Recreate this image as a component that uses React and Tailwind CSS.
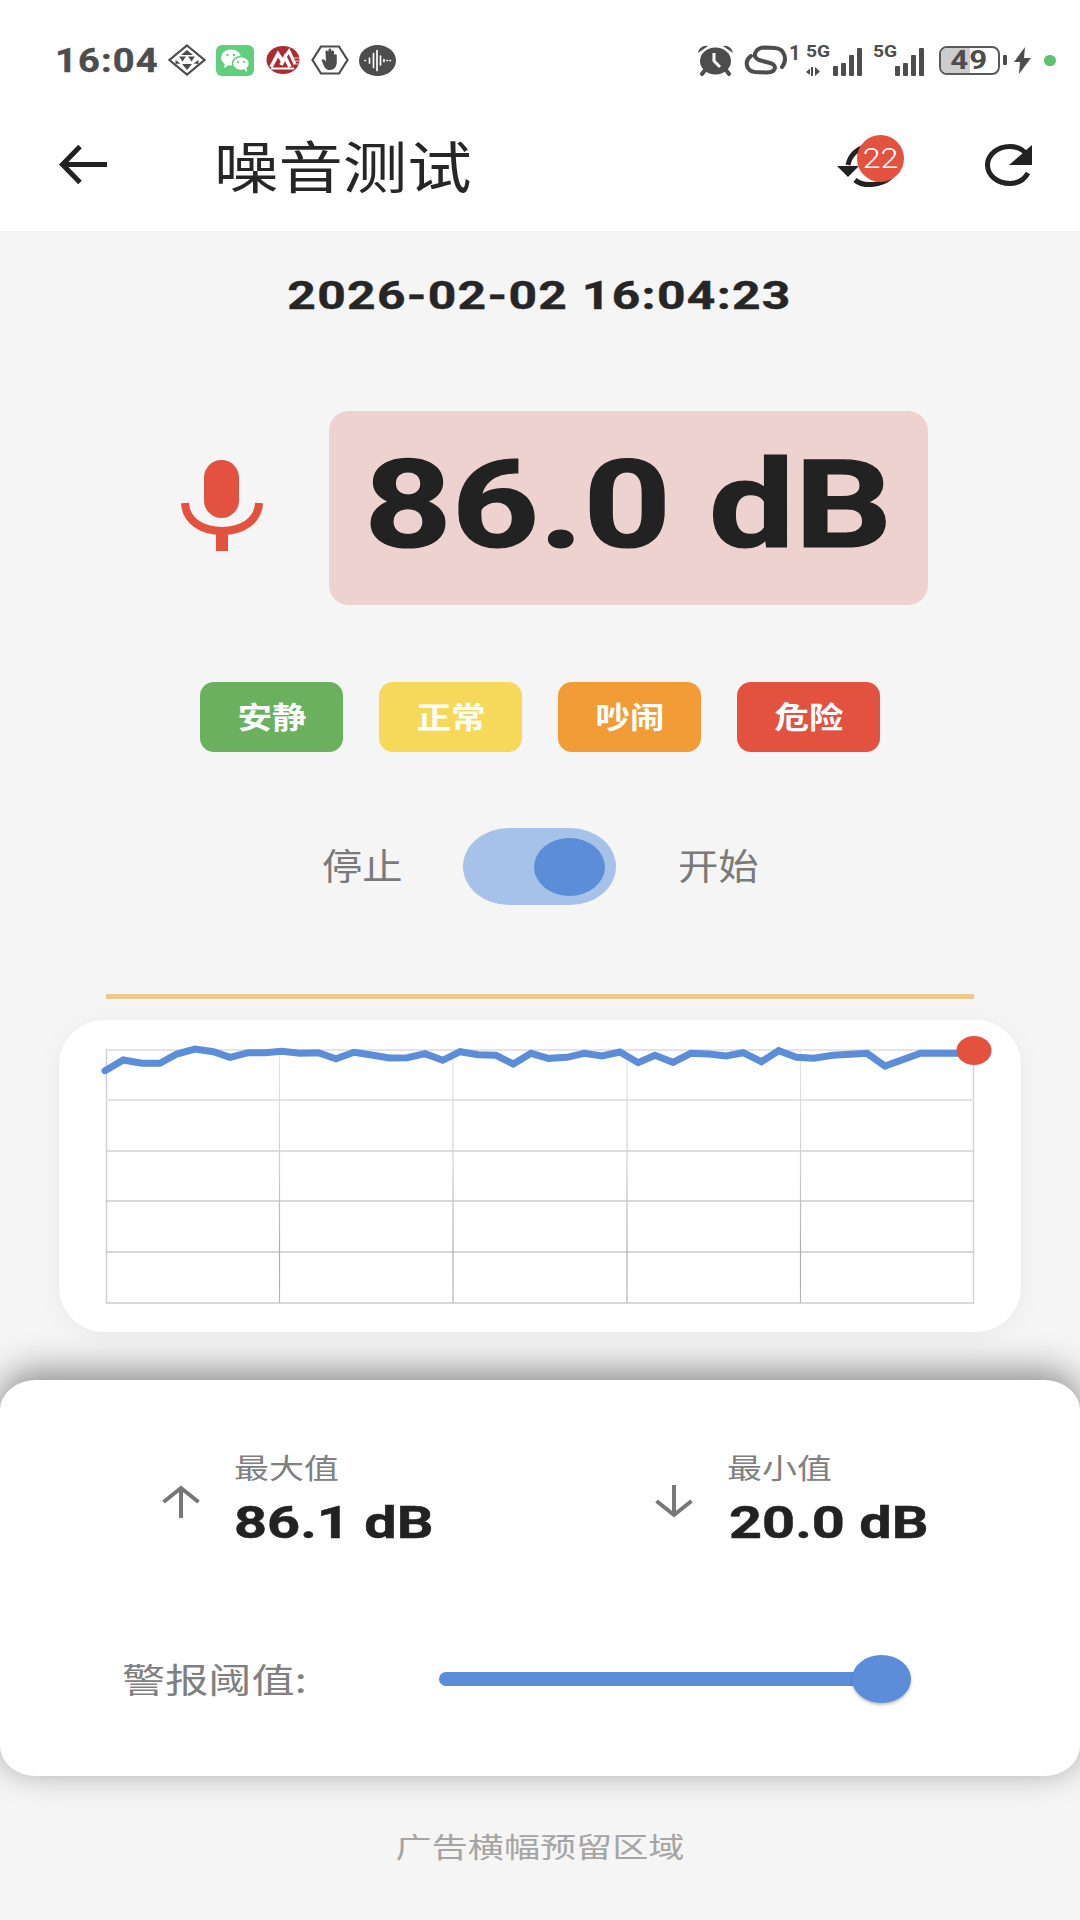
import React from "react";

const SANS = "font-['Roboto','Noto_Sans_CJK_SC',sans-serif]";

const L1 = [[165,272],[220,240],[275,250],[330,250],[380,222],[435,207],[490,215],[540,232],[595,218],[645,218],[695,214],[750,220],[805,218],[858,236],[912,217],[965,225],[1018,234],[1072,233],[1125,221],[1178,241],[1230,215],[1285,224],[1338,226],[1390,252],[1443,220],[1497,236]];
const L2 = [[30,235],[78,232],[128,220],[180,228],[232,216],[285,248],[334,226],[386,247],[438,220],[490,222],[540,228],[590,218],[643,245],[693,212],[745,232],[795,235],[850,226],[950,220],[1002,258],[1105,220],[1258,220]];
const pts = [
  ...L1.map(([x, y]) => [50 + x / 3 - 106, 980 + y / 3 - 1049]),
  ...L2.map(([x, y]) => [540 + x / 2.904 - 106, 980 + y / 3 - 1049]),
].map(([x, y]) => `${x.toFixed(1)},${y.toFixed(1)}`).join(" ");

function Chart() {
  const hs = [[51, "#e4e4e4", 2], [102, "#d2d2d2", 1.4], [152, "#b4b4b4", 1.2], [203, "#adadad", 1.2], [254, "#cccccc", 1.4]];
  const vs = [173.5, 347, 521, 694.5];
  return (
    <svg width="868" height="254" viewBox="0 0 868 254" className="block overflow-visible">
      <defs>
        <linearGradient id="vg" gradientUnits="userSpaceOnUse" x1="0" y1="0" x2="0" y2="254">
          <stop offset="0" stopColor="#e6e6e6" />
          <stop offset="0.45" stopColor="#cfcfcf" />
          <stop offset="0.8" stopColor="#adadad" />
          <stop offset="1" stopColor="#b5b5b5" />
        </linearGradient>
      </defs>
      <line x1="0" x2="868" y1="1" y2="1" stroke="#e4e4e4" strokeWidth="2" />
      <line x1="0.5" x2="0.5" y1="0" y2="254" stroke="#d0d0d0" strokeWidth="1.5" />
      <line x1="867.5" x2="867.5" y1="0" y2="254" stroke="#d4d4d4" strokeWidth="1.5" />
      {hs.map(([y, c, w]) => <line key={y} x1="0" x2="868" y1={y} y2={y} stroke={c} strokeWidth={w} />)}
      {vs.map((x) => <line key={x} x1={x} x2={x} y1="0" y2="254" stroke="url(#vg)" strokeWidth="1.2" />)}
      <polyline points={pts} fill="none" stroke="#5b8dd9" strokeWidth="7" strokeLinejoin="miter" strokeLinecap="round" />
      <ellipse cx="868" cy="1.5" rx="17.5" ry="14.5" fill="#e2523f" />
    </svg>
  );
}

const Gray = "#4d4d4d";

function Diamond() {
  return (
    <svg width="38" height="32" viewBox="0 0 38 32">
      <path d="M19 1.5 36.500 16 19 30.500 1.500 16Z" fill="none" stroke={Gray} strokeWidth="2.200" />
      <path d="M19 6 25 11H13ZM11 12.500h7l-3.500 5ZM20 12.500h7l-3.500 5ZM7.500 16l5 3.500-5 .5ZM30.500 16l-5 3.500 5 .5ZM14 20h10l-5 6Z" fill={Gray} />
    </svg>
  );
}
function WeChat() {
  return (
    <svg width="38" height="31" viewBox="0 0 38 31">
      <rect width="38" height="31" rx="6" fill="#5fce7d" />
      <ellipse cx="15" cy="12.500" rx="10" ry="8" fill="#fff" />
      <path d="M9 18l-1 5 5-3Z" fill="#fff" />
      <ellipse cx="25" cy="18.500" rx="8.500" ry="7" fill="#fff" stroke="#5fce7d" strokeWidth="1.500" />
      <path d="M28 24l3 3-.5-4Z" fill="#fff" />
      <circle cx="11.500" cy="10" r="1.200" fill="#5fce7d" /><circle cx="18" cy="10" r="1.200" fill="#5fce7d" />
      <circle cx="22" cy="17" r="1.100" fill="#5fce7d" /><circle cx="28" cy="17" r="1.100" fill="#5fce7d" />
    </svg>
  );
}
function Cmb() {
  return (
    <svg width="34" height="28" viewBox="0 0 34 28">
      <ellipse cx="17" cy="14" rx="16.500" ry="14" fill="#ab2c32" />
      <path d="M5 21 12 8 16.500 15M24 21 19 11 15 19" fill="none" stroke="#fff" strokeWidth="3.600" />
      <path d="M19 11 23 5 29 18" fill="none" stroke="#fff" strokeWidth="3" />
      <path d="M5 22.500h23" stroke="#fff" strokeWidth="2" />
      <path d="M26 15h8M27 18h6M26 12h7" stroke="#e8c9c9" strokeWidth="1.200" />
    </svg>
  );
}
function Hand() {
  return (
    <svg width="38" height="30" viewBox="0 0 38 30">
      <path d="M10 1.500h18L36.500 15 28 28.500H10L1.500 15Z" fill="none" stroke={Gray} strokeWidth="2.200" />
      <path d="M10.500 15c1.500-1.500 3.500-.5 4.500 2l-.5-10c0-2 2.500-2 2.700 0L17.500 5c0-2 2.800-2 2.800 0v2c0-2 2.800-2 2.800 0v3.500c0-1.700 2.700-1.700 2.700 0v6.500c0 5-3 8-6.800 8-3.500 0-5-1.500-6.500-5Z" fill={Gray} />
    </svg>
  );
}
function Voice() {
  return (
    <svg width="37" height="31" viewBox="0 0 37 31">
      <ellipse cx="18.500" cy="15.500" rx="18.500" ry="15.500" fill={Gray} />
      <path d="M6 15.500h.5M10.500 13v5M14.500 8.500v14M18 5.500v20M21.500 11v9M25 14.500v2M28 15.500h.5M31 15.500h.5" stroke="#fff" strokeWidth="1.700" strokeLinecap="round" />
    </svg>
  );
}
function Alarm() {
  return (
    <svg width="35" height="31" viewBox="0 0 35 31">
      <path d="M0 8C1 3 5 0 10 1ZM35 8C34 3 30 0 25 1Z" fill={Gray} />
      <path d="M7 25l-3 4M28 25l3 4" stroke={Gray} strokeWidth="4" strokeLinecap="round" />
      <ellipse cx="17.500" cy="16" rx="15.500" ry="13.500" fill={Gray} />
      <path d="M16 8v8l6 6" stroke="#fff" strokeWidth="3" fill="none" />
    </svg>
  );
}
function LinkIcon() {
  return (
    <svg width="44" height="30" viewBox="0 0 44 30">
      <path d="M39 22C44 16 43 4 32 3L22 2.500C11 2.500 9 13 16 15L27 18C35 20 33 28 23 27.500L12 27C3 26 1 16 8 11" fill="none" stroke={Gray} strokeWidth="4" strokeLinecap="round" />
    </svg>
  );
}
function Signal({ data, width }) {
  return (
    <div className="relative h-[31px]" style={{ width }}>
      <div className="absolute left-0 top-[-1px] text-[16px] leading-[16px] font-bold text-[#4d4d4d] scale-x-[1.2] origin-left font-['Roboto',sans-serif]">5G</div>
      {data && (
        <svg width="15" height="9" viewBox="0 0 15 9" className="absolute left-0 bottom-0">
          <path d="M0 5 4 1.500V8ZM5 0h2v9H5ZM9 0v9l5-4.500Z" fill={Gray} />
        </svg>
      )}
      <div className="absolute right-0 bottom-0 flex items-end gap-[3px]">
        <div className="w-[5px] h-[10px] bg-[#4d4d4d] rounded-[1px]" />
        <div className="w-[5px] h-[13px] bg-[#4d4d4d] rounded-[1px]" />
        <div className="w-[5px] h-[21px] bg-[#4d4d4d] rounded-[1px]" />
        <div className="w-[5px] h-[28px] bg-[#4d4d4d] rounded-[1px]" />
      </div>
    </div>
  );
}
function Battery() {
  return (
    <div className="flex items-center gap-[3px]">
      <div className="relative w-[61px] h-[29px] rounded-[8px] border-[2px] border-[#5a5a5a] overflow-hidden flex items-center justify-center">
        <div className="absolute left-0 top-0 bottom-0 w-[29px] bg-[#cccccc]" />
        <span className={`relative text-[25px] leading-none font-bold text-[#4d4d4d] tracking-[1px] scale-x-[1.25] ${SANS}`}>49</span>
      </div>
      <div className="w-[4px] h-[10px] bg-[#4d4d4d] rounded-[1px]" />
    </div>
  );
}
function Bolt() {
  return (
    <svg width="17" height="27" viewBox="0 0 17 27">
      <path d="M11 0 0 15h6L5 27 17 11h-7Z" fill={Gray} />
    </svg>
  );
}

function StatusBar() {
  return (
    <div className="h-[104px] flex items-start justify-between pl-[55px] pr-[24px] pt-[43px]">
      <div className="flex items-center h-[34px]">
        <span className={`w-[103px] text-[34px] leading-none font-bold text-[#4d4d4d] tracking-[1px] scale-x-[1.12] origin-left [-webkit-text-stroke:0.4px_#4d4d4d] ${SANS}`}>16:04</span>
        <div className="flex items-center gap-[10px] ml-[10px]">
          <Diamond />
          <WeChat />
          <div className="ml-[2px] flex"><Cmb /></div>
          <div className="ml-[1px] flex"><Hand /></div>
          <Voice />
        </div>
      </div>
      <div className="flex items-center h-[34px]">
        <Alarm />
        <div className="ml-[10px]"><LinkIcon /></div>
        <span className={`w-[19px] pl-[2px] text-[20px] leading-none font-bold text-[#4d4d4d] self-start ${SANS}`}>1</span>
        <Signal data width={56} />
        <div className="ml-[11px]"><Signal width={51} /></div>
        <div className="ml-[15px]"><Battery /></div>
        <div className="ml-[7px] flex"><Bolt /></div>
        <div className="ml-[13px] w-[12px] h-[11px] rounded-full bg-[#5cc26c]" />
      </div>
    </div>
  );
}

function Header() {
  return (
    <div className="h-[127px] bg-white flex items-start relative pt-[40px] pl-[59px]">
      <svg width="50" height="42" viewBox="0 0 50 42" fill="none" stroke="#222" strokeWidth="5">
        <path d="M48 20.500H3.500M21 2.500 3.500 20.500 21 38.500" />
      </svg>
      <span className="ml-[105px] -mt-[12px] text-[56px] leading-[64px] text-[#262626] scale-x-[1.15] origin-left font-['Noto_Sans_CJK_SC',sans-serif]">噪音测试</span>
      <div className="ml-auto mr-[47px] flex items-start gap-[82px]">
        <div className="relative w-[66px] h-[44px]">
          <svg width="66" height="44" viewBox="0 0 66 44" fill="none" stroke="#222" strokeWidth="5">
            <path d="M11 21C13 10 22 3 32 3" />
            <path d="M0 22h22L11 33Z" fill="#222" stroke="none" />
            <path d="M18 36c8 7 26 6 36-3" />
          </svg>
          <div className="absolute left-[20px] -top-[9px] w-[47px] h-[47px] rounded-full bg-[#e2523f] flex items-center justify-center">
            <span className={`text-[28px] leading-none font-light text-white scale-x-[1.15] ${SANS}`}>22</span>
          </div>
        </div>
        <svg width="48" height="42" viewBox="0 0 48 42" fill="none">
          <path d="M43 29C39 36 32 39.500 25 39.500 12 39.500 2.500 31 2.500 21 2.500 11 12 2.500 25 2.500 33 2.500 39 6 43 12" stroke="#222" strokeWidth="5" />
          <path d="M47 1v20H24Z" fill="#222" />
        </svg>
      </div>
    </div>
  );
}

function Badge({ cls, children }) {
  return (
    <div className={`w-[143px] h-[70px] rounded-[14px] flex items-center justify-center ${cls}`}>
      <span className="-mt-[4px] text-[30px] leading-none font-bold text-white scale-x-[1.15] font-['Noto_Sans_CJK_SC',sans-serif]">{children}</span>
    </div>
  );
}

function Stat({ up, label, value, gapCls, valueCls }) {
  return (
    <div className={`flex items-start ${gapCls}`}>
      <svg width="38" height="33" viewBox="0 0 38 33" fill="none" stroke="#777" strokeWidth="4" className="mt-[33px]">
        {up ? <path d="M19 33V3M1.500 17 19 3 36.500 17" /> : <path d="M19 0V30M1.500 16 19 30 36.500 16" />}
      </svg>
      <div className="ml-[34px] flex flex-col">
        <span className="text-[28px] leading-[30px] text-[#808080] scale-x-[1.25] origin-left font-['Noto_Sans_CJK_SC',sans-serif]">{label}</span>
        <span className={`mt-[16px] text-[44px] leading-[50px] font-bold text-[#222] scale-x-[1.31] origin-left whitespace-nowrap [-webkit-text-stroke:0.5px_#222] ${valueCls} ${SANS}`}>{value}</span>
      </div>
    </div>
  );
}

export default function App() {
  return (
    <div className="relative w-[1080px] h-[1920px] overflow-hidden bg-[#f5f5f5] flex flex-col">
      <div className="bg-white"><StatusBar /><Header /></div>

      <div className="h-[46px] mt-[42px] flex items-center justify-center text-[38px] leading-none font-bold text-[#262626]">
        <span className={`scale-x-[1.31] tracking-[1px] whitespace-nowrap [-webkit-text-stroke:0.4px_#262626] ${SANS}`}>2026-02-02 16:04:23</span>
      </div>

      <div className="mt-[92px] flex items-start pl-[181px]">
        <svg width="82" height="92" viewBox="0 0 82 92" className="mt-[49px]">
          <rect x="23" y="0" width="35" height="58" rx="17.500" fill="#e2523f" />
          <path d="M4 43C5 61 21 71 41 71 61 71 77 61 78 43" fill="none" stroke="#e2523f" strokeWidth="8" />
          <rect x="35" y="72" width="12" height="19" fill="#e2523f" />
        </svg>
        <div className="ml-[66px] w-[599px] h-[194px] rounded-[20px] bg-[#eed2d0] flex justify-center">
          <span className={`mt-[23px] text-[122px] leading-[144px] font-bold text-[#222] scale-x-[1.25] whitespace-nowrap [-webkit-text-stroke:1.2px_#222] ${SANS}`}>86.0 dB</span>
        </div>
      </div>

      <div className="mt-[77px] flex justify-center gap-[36px]">
        <Badge cls="bg-[#6ab05f]">安静</Badge>
        <Badge cls="bg-[#f6d95b]">正常</Badge>
        <Badge cls="bg-[#f29c38]">吵闹</Badge>
        <Badge cls="bg-[#e2523f]">危险</Badge>
      </div>

      <div className="mt-[76px] h-[77px] flex items-center pl-[322px] text-[36px] leading-none text-[#7a7a7a] font-['Noto_Sans_CJK_SC',sans-serif]">
        <span className="-mt-[5px] w-[80px] scale-x-[1.12] origin-left">停止</span>
        <div className="ml-[61px] relative w-[153px] h-[77px] rounded-[46px/38.5px] bg-[#a6c2e8] flex items-center justify-end pr-[11px]">
          <div className="w-[71px] h-[58px] rounded-[50%] bg-[#5b8dd9]" />
        </div>
        <span className="-mt-[5px] ml-[62px] w-[80px] scale-x-[1.12] origin-left">开始</span>
      </div>

      <div className="mt-[89px] mx-[106px] h-[5px] bg-[#ecca8e]" />

      <div className="mt-[21px] mx-[59px] h-[312px] bg-white rounded-[45px] shadow-[0_4px_24px_rgba(0,0,0,0.05)] pt-[29px] pl-[47px]">
        <Chart />
      </div>

      <div className="mt-[48px] h-[396px] bg-white rounded-[36px/30px] shadow-[0_-8px_36px_rgba(0,0,0,0.45)] flex flex-col">
        <div className="mt-[72px] flex pl-[162px]">
          <Stat up label="最大值" value="86.1 dB" gapCls="w-[493px]" valueCls="" />
          <Stat label="最小值" value="20.0 dB" valueCls="ml-[2px]" />
        </div>
        <div className="mt-[114px] flex items-center pl-[122px]">
          <span className="w-[317px] text-[34px] leading-none text-[#808080] scale-x-[1.27] origin-left font-['Noto_Sans_CJK_SC',sans-serif]">警报阈值:</span>
          <div className="relative w-[441px] h-[14px] rounded-full bg-[#5b8dd9]">
            <div className="absolute right-[-31px] top-[-17px] w-[59px] h-[48px] rounded-[50%] bg-[#5b8dd9] shadow-[0_2px_3px_rgba(0,0,0,0.25)]" />
          </div>
        </div>
      </div>

      <div className="mt-[54px] flex justify-center text-[28px] leading-[32px] text-[#a5a5a5] font-['Noto_Sans_CJK_SC',sans-serif]">
        <span className="scale-x-[1.29] whitespace-nowrap">广告横幅预留区域</span>
      </div>
    </div>
  );
}
